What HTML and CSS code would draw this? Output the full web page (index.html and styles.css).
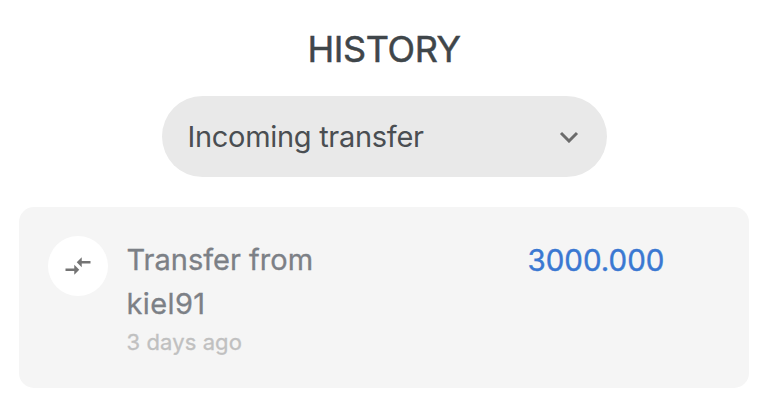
FILE: index.html
```html
<!DOCTYPE html>
<html lang="en">
<head>
    <meta charset="UTF-8">
    <title>History</title>
    <link rel="stylesheet" href="styles.css">
</head>
<body>
<div class="history">
    <h1 class="title">HISTORY</h1>
    <div class="filter">
        <span class="filter-text">Incoming transfer</span>
        <svg class="chevron" viewBox="0 0 20 12">
            <path d="M2 2l8 8 8-8"/>
        </svg>
    </div>
    <div class="card">
        <div class="icon">
            <svg viewBox="0 0 24 24">
                <path d="M9.01 14H2v2h7.01v3L13 15l-3.99-4v3zm5.98-1v-3H22V8h-7.01V5L11 9l3.99 4z"/>
            </svg>
        </div>
        <div class="info">
            <p class="name">Transfer from<br><span class="user">kiel91</span></p>
            <p class="time">3 days ago</p>
        </div>
        <div class="amount">3000.000</div>
    </div>
</div>
</body>
</html>
```
FILE: styles.css
```css
* {
    margin: 0;
    padding: 0;
    box-sizing: border-box;
}

body {
    background-color: #fff;
    font-family: Inter, "Liberation Sans", sans-serif;
}

.history {
    padding: 27px 19px 0;
}

.title {
    height: 44px;
    line-height: 44px;
    font-size: 36px;
    font-weight: 400;
    letter-spacing: -0.4px;
    text-align: center;
    color: #3f464a;
    -webkit-text-stroke: 0.5px #3f464a;
}

.filter {
    display: flex;
    align-items: center;
    justify-content: space-between;
    width: 445px;
    height: 81px;
    margin: 25px 0 0 142.5px;
    padding: 0 28px 0 26px;
    border-radius: 41px;
    background-color: #e9e9e9;
}

.filter-text {
    font-size: 29px;
    letter-spacing: -0.3px;
    color: #4a4e52;
}

.chevron {
    width: 20px;
    height: 12px;
    fill: none;
    stroke: #6b6b6b;
    stroke-width: 3;
}

/* transfer row */
.card {
    display: flex;
    width: 730px;
    height: 181px;
    margin-top: 30px;
    padding: 29px;
    border-radius: 15px;
    background-color: #f5f5f5;
}

.icon {
    display: flex;
    align-items: center;
    justify-content: center;
    width: 60px;
    height: 60px;
    border-radius: 50%;
    background-color: #fff;
}

.icon svg {
    width: 30px;
    height: 30px;
    fill: #747474;
}

.info {
    width: 419.5px;
    padding-left: 18.5px;
}

.name {
    margin-top: 2px;
    line-height: 44px;
    font-size: 29px;
    color: #7c8086;
    -webkit-text-stroke: 0.3px #7c8086;
}

.user {
    letter-spacing: 0.4px;
}

.time {
    line-height: 32px;
    font-size: 22px;
    letter-spacing: 0.1px;
    color: #c0c0c0;
    -webkit-text-stroke: 0.3px #c0c0c0;
}

.amount {
    margin-top: 2px;
    line-height: 44px;
    font-size: 29.5px;
    color: #3a78d2;
    -webkit-text-stroke: 0.4px #3a78d2;
}
```
